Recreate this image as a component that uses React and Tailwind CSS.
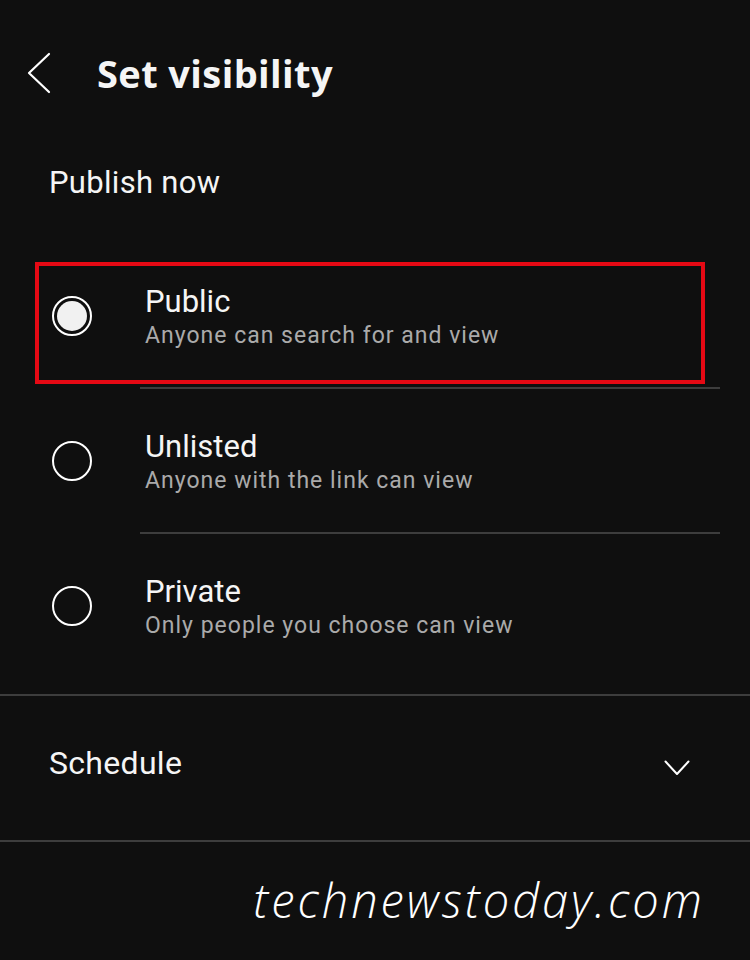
import React from 'react';

const options = [
  { id: 'public', title: 'Public', desc: 'Anyone can search for and view' },
  { id: 'unlisted', title: 'Unlisted', desc: 'Anyone with the link can view' },
  { id: 'private', title: 'Private', desc: 'Only people you choose can view' },
];

function Radio({ checked }) {
  return (
    <div className="w-[40px] h-[40px] rounded-full border-2 border-white flex items-center justify-center shrink-0">
      {checked && <div className="w-[30px] h-[30px] rounded-full bg-[#f1f1f1]" />}
    </div>
  );
}

export default function App() {
  const selected = 'public';

  return (
    <div className="w-[750px] h-[960px] bg-[#0f0f0f] text-white overflow-hidden" style={{ fontFamily: 'Roboto, "Liberation Sans", sans-serif' }}>
      {/* header */}
      <div className="flex items-center h-[74px] mt-[36px]">
        <svg className="ml-[27px]" width="24" height="42" viewBox="0 0 24 42" fill="none">
          <path d="M22 2 L2 21 L22 40" stroke="#ffffff" strokeWidth="2.2" strokeLinecap="round" strokeLinejoin="round" />
        </svg>
        <h1 className="ml-[46px] text-[38px] font-bold tracking-[0.4px] text-[#f5f5f5]" style={{ fontFamily: '"Open Sans", "DejaVu Sans", sans-serif' }}>
          Set visibility
        </h1>
      </div>

      <div className="mt-[53px] ml-[49px] h-[40px] leading-[40px] text-[31px] tracking-[0.3px] text-[#f5f5f5]">Publish now</div>

      <div className="mt-[41px]">
        {options.map((opt, i) => (
          <div key={opt.id}>
            <div className="relative flex items-center h-[143px]">
              {opt.id === selected && (
                <div className="absolute left-[35px] top-[18px] w-[670px] h-[122px] border-[4px] border-[#e50914]" />
              )}
              <div className="ml-[52px]">
                <Radio checked={opt.id === selected} />
              </div>
              <div className="ml-[53px] mt-[4px] flex flex-col">
                <span className="text-[31px] leading-[36px] text-[#f5f5f5]">{opt.title}</span>
                <span className="text-[23px] leading-[32px] tracking-[1px] text-[#aaaaaa]">{opt.desc}</span>
              </div>
            </div>
            {i < options.length - 1 && <div className="ml-[140px] w-[580px] h-[2px] bg-[#3d3d3d]" />}
          </div>
        ))}
      </div>

      <div className="mt-[17px] h-[2px] bg-[#3d3d3d]" />

      {/* schedule */}
      <div className="flex items-center justify-between h-[144px] pl-[49px] pr-[60px]">
        <span className="text-[32px] tracking-[0.3px] text-[#f5f5f5] -mt-[10px]">Schedule</span>
        <svg width="26" height="16" viewBox="0 0 26 16" fill="none">
          <path d="M1.5 1.5 L13 14 L24.5 1.5" stroke="#ffffff" strokeWidth="2" strokeLinecap="round" strokeLinejoin="round" />
        </svg>
      </div>

      <div className="h-[2px] bg-[#3d3d3d]" />

      {/* watermark */}
      <div className="flex justify-end pr-[45px] mt-[23px]">
        <span className="text-[47px] italic font-light tracking-[3px] text-white" style={{ fontFamily: '"Open Sans", Lato, sans-serif' }}>
          technewstoday.com
        </span>
      </div>
    </div>
  );
}
